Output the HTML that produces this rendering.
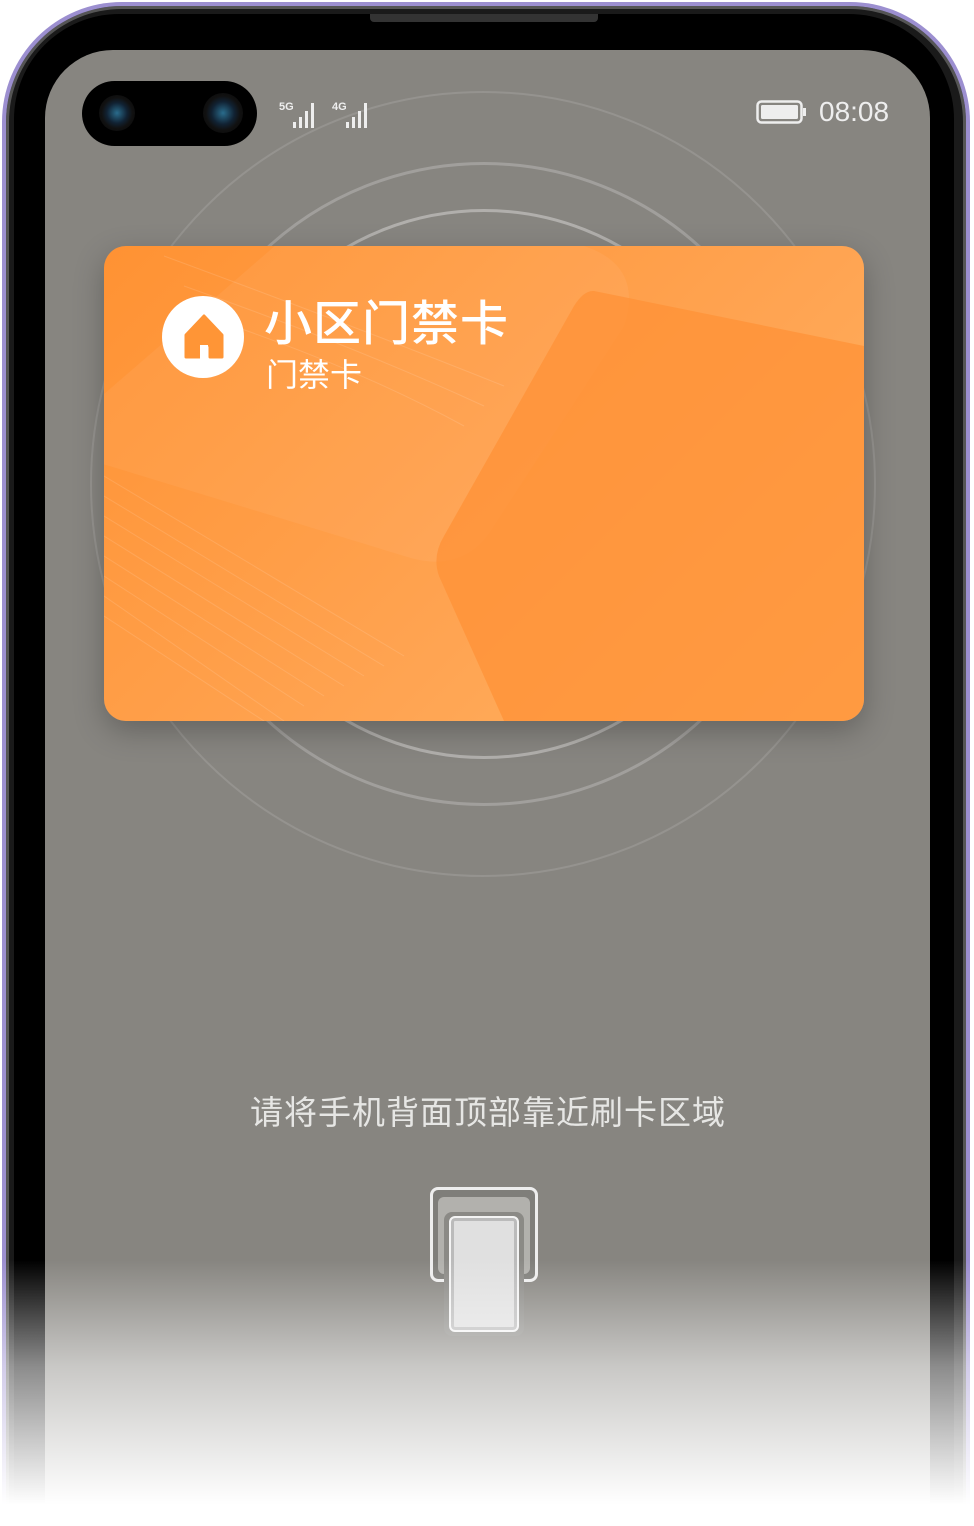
<!DOCTYPE html>
<html><head><meta charset="utf-8"><style>
*{margin:0;padding:0;box-sizing:border-box}
html,body{width:974px;height:1526px;overflow:hidden;background:#fff}
body{font-family:"Liberation Sans","Noto Sans CJK SC",sans-serif}
.wrap{position:absolute;left:0;top:0;width:974px;height:1526px;overflow:hidden}
.frame{position:absolute;left:2px;top:2px;width:968px;height:1524px;border-radius:120px 120px 0 0;background:#1a1a1a;border:4px solid #9c8fd0;border-bottom:none;box-shadow:inset 0 0 0 3px #555}
.bezel{position:absolute;left:14px;top:14px;width:940px;height:1512px;border-radius:105px 105px 0 0;background:#000}
.screen{position:absolute;left:45px;top:50px;width:885px;height:1476px;border-radius:68px 68px 0 0;background:#878580;overflow:hidden}
.ring{position:absolute;border-radius:50%;border:2px solid rgba(255,255,255,.12)}
.fade{position:absolute;left:0;top:1260px;width:974px;height:266px;background:linear-gradient(rgba(255,255,255,0),rgba(255,255,255,.55) 40%,#fff 92%)}
.cam{position:absolute;left:82px;top:81px;width:175px;height:65px;border-radius:33px;background:#000}
.lens{position:absolute;border-radius:50%;background:radial-gradient(circle,#2a6c8c 0,#123 40%,#111 60%,#050505 100%)}
.card{position:absolute;left:104px;top:246px;width:760px;height:475px;border-radius:22px;overflow:hidden;background:linear-gradient(135deg,#ff9233,#ffa452 60%,#ffb463);box-shadow:0 10px 30px rgba(0,0,0,.25)}
</style></head><body>
<div class="wrap">
<div class="frame"></div>
<div class="bezel"></div>
<div style="position:absolute;left:370px;top:14px;width:228px;height:8px;background:#333;border-radius:0 0 4px 4px"></div>
<div class="screen">
 <div class="ring" style="left:45px;top:41px;width:786px;height:786px"></div>
 <div class="ring" style="left:117px;top:112px;width:644px;height:644px;border-width:3px;border-color:rgba(255,255,255,.22)"></div>
 <div class="ring" style="left:164px;top:159px;width:550px;height:550px;border-width:3px;border-color:rgba(255,255,255,.35)"></div>
</div>
<div class="cam"><div class="lens" style="left:17px;top:14px;width:36px;height:36px"></div><div class="lens" style="left:121px;top:12px;width:40px;height:40px"></div></div>
<div style="position:absolute;left:279px;top:101px;color:#eee;font-size:11px;font-weight:bold">5G</div>
<svg style="position:absolute;left:293px;top:100px" width="32" height="30"><g fill="#eee"><rect x="0" y="22" width="3" height="6"/><rect x="6" y="17" width="3" height="11"/><rect x="12" y="11" width="3" height="17"/><rect x="18" y="3" width="3" height="25"/></g></svg>
<div style="position:absolute;left:332px;top:101px;color:#eee;font-size:11px;font-weight:bold">4G</div>
<svg style="position:absolute;left:346px;top:100px" width="32" height="30"><g fill="#eee"><rect x="0" y="22" width="3" height="6"/><rect x="6" y="17" width="3" height="11"/><rect x="12" y="11" width="3" height="17"/><rect x="18" y="3" width="3" height="25"/></g></svg>
<svg style="position:absolute;left:756px;top:100px" width="52" height="26"><rect x="1.5" y="1.5" width="44" height="21" rx="4" fill="none" stroke="#eee" stroke-width="2.5"/><rect x="5" y="5" width="37" height="14" rx="1.5" fill="#eee"/><rect x="47" y="8" width="3" height="8" fill="#eee"/></svg>
<div style="position:absolute;left:819px;top:96px;color:#eee;font-size:28px">08:08</div>
<div class="card">
 <svg width="760" height="475" style="position:absolute;left:0;top:0">
  <path d="M240 -60 L480 0 Q540 20 520 80 L390 280 Q360 330 300 310 L-60 200 Z" fill="rgba(255,255,255,.05)"/>
  <g fill="none" stroke="rgba(255,255,255,.12)" stroke-width="1">
   <path d="M0 230 L300 410"/><path d="M0 250 L280 420"/><path d="M0 270 L260 430"/><path d="M0 290 L240 440"/><path d="M0 310 L220 450"/><path d="M0 330 L200 460"/><path d="M0 350 L180 475"/><path d="M0 370 L160 475"/>
   <path d="M60 10 Q250 80 400 140"/><path d="M80 40 Q250 100 380 160"/><path d="M100 70 Q250 120 360 180"/>
  </g>
  <path d="M490 45 L760 100 L760 475 L400 475 L335 330 Q328 310 340 290 L470 60 Q480 44 490 45 Z" fill="#ff9237" opacity=".75"/>
 </svg>
 <div style="position:absolute;left:58px;top:50px;width:82px;height:82px;border-radius:50%;background:#fff"></div>
 <svg style="position:absolute;left:78px;top:67px" width="44" height="46"><path d="M22 3 L40 22 L40 44 L28 44 L28 32 L18 32 L18 44 L4 44 L4 22 Z" fill="#ff9536" stroke="#ff9536" stroke-width="3" stroke-linejoin="round"/><rect x="18" y="32" width="8" height="14" fill="#fff"/></svg>
 <div style="position:absolute;left:160px;top:38px;color:#fff;font-size:48px;letter-spacing:1px;font-weight:500">小区门禁卡</div>
 <div style="position:absolute;left:162px;top:104px;color:#fff;font-size:32px">门禁卡</div>
</div>
<div style="position:absolute;left:0;width:974px;top:1086px;text-align:center;color:#e6e6e4;font-size:33px;letter-spacing:1px;padding-left:2px">请将手机背面顶部靠近刷卡区域</div>
<div style="position:absolute;left:430px;top:1187px;width:108px;height:95px;border:3px solid #eee;border-radius:8px;background:#7f7e7a"></div>
<div style="position:absolute;left:438px;top:1197px;width:92px;height:77px;border-radius:6px;background:#b2b1ad"></div>
<div style="position:absolute;left:444px;top:1212px;width:80px;height:124px;border-radius:8px;background:#8b8a86"></div>
<div style="position:absolute;left:449px;top:1216px;width:70px;height:116px;border:2px solid #f4f4f4;border-radius:6px;background:#e0e0e0;box-shadow:inset 0 0 0 3px #bbb"></div>
<div class="fade"></div>
</div>
</body></html>
